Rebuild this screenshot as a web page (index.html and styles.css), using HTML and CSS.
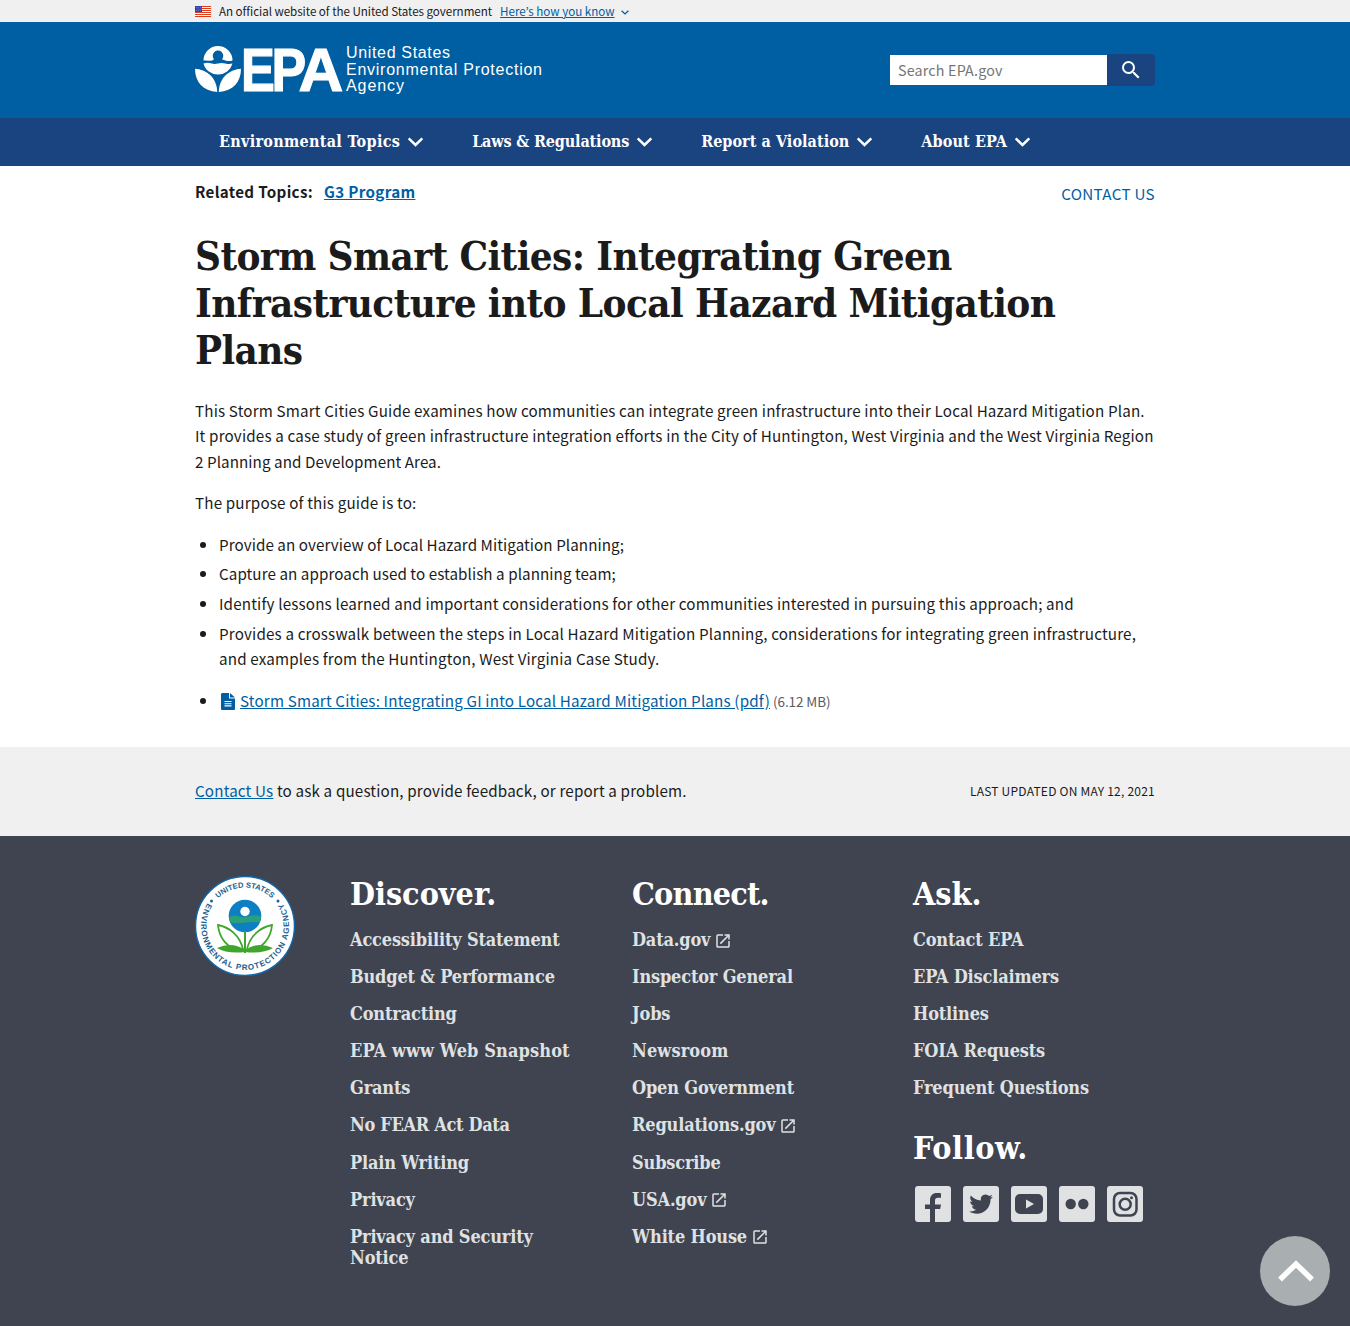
FILE: index.html
```html
<!DOCTYPE html>
<html lang="en">
<head>
<meta charset="utf-8">
<title>Storm Smart Cities: Integrating Green Infrastructure into Local Hazard Mitigation Plans | US EPA</title>
<link rel="stylesheet" href="styles.css">
</head>
<body>
<svg class="defs" width="0" height="0" aria-hidden="true">
  <symbol id="chevron" viewBox="0 0 16 10"><path d="M1.200 1.400 8 8l6.800-6.600" fill="none" stroke="currentColor" stroke-width="2.500"/></symbol>
  <symbol id="launch" viewBox="0 0 24 24"><path fill="currentColor" d="M19 19H5V5h7V3H5a2 2 0 0 0-2 2v14a2 2 0 0 0 2 2h14c1.100 0 2-.9 2-2v-7h-2v7zM14 3v2h3.590l-9.830 9.830 1.410 1.410L19 6.410V10h2V3h-7z"/></symbol>
</svg>

<div class="banner">
  <div class="container banner-row">
    <svg class="flag" viewBox="0 0 16 11"><path fill="#fff" d="M0 0h16v11H0z"/><path stroke="#db3e1f" d="M0 .5h16M0 2.500h16M0 4.500h16M0 6.500h16M0 8.500h16M0 10.500h16"/><path fill="#1e33b1" d="M0 0h7v6H0z"/><path stroke="#b9c2f0" stroke-width=".8" stroke-dasharray="1 1" d="M.7 1.200H7M1.500 3H7M.7 4.800H7"/></svg>
    <span class="banner-text">An official website of the United States government</span>
    <a class="banner-link" href="#">Here’s how you know</a>
    <svg class="banner-chev"><use href="#chevron"/></svg>
  </div>
</div>

<header class="header">
  <div class="container header-row">
    <svg class="logo" width="350" height="52" viewBox="0 0 350 52" role="img" aria-label="United States Environmental Protection Agency">
      <g fill="#fff">
        <path d="M8.500 14.500A14.500 14.500 0 0 1 37.500 14.500q-3.500 1-7 0-3-1-3.500-1.300A5.300 5.300 0 1 0 19 13.200q-2 1.800-4.500 1.500t-6-.2z"/>
        <path d="M8.500 17.500q4-1.300 7.500-.2t7 .1 7.300 0 7.200.1A14.600 14.600 0 0 1 23 28.500 14.600 14.600 0 0 1 8.500 17.500z"/>
        <path d="M0 22.700C11 23.500 22 31 22.200 46 8 45 0 36 0 22.700z"/>
        <path d="M46 22.700C35 23.500 24 31 23.800 46 38 45 46 36 46 22.700z"/>
        <g font-family="Liberation Sans, Arial, sans-serif" font-weight="700" font-size="62" stroke="#fff" stroke-width="1.200">
          <text transform="translate(46 44.500) scale(.82 1)">E</text>
          <text transform="translate(76.500 44.500) scale(.84 1)">P</text>
          <text transform="translate(103.500 44.500)">A</text>
        </g>
        <g font-family="Liberation Sans, Arial, sans-serif" font-size="16">
          <text x="151" y="12.300" textLength="104">United States</text>
          <text x="151" y="28.800" textLength="196">Environmental Protection</text>
          <text x="151" y="45.300" textLength="58">Agency</text>
        </g>
      </g>
    </svg>
    <form class="search">
      <input type="search" placeholder="Search EPA.gov" aria-label="Search">
      <button type="button" aria-label="Search"><svg viewBox="0 0 24 24"><path fill="#fff" d="M15.500 14h-.79l-.28-.27A6.470 6.470 0 0 0 16 9.500 6.500 6.500 0 1 0 9.500 16c1.610 0 3.090-.59 4.230-1.570l.27.28v.79l5 4.990L20.490 19l-4.990-5zm-6 0a4.500 4.500 0 1 1 0-9 4.500 4.500 0 0 1 0 9z"/></svg></button>
    </form>
  </div>
</header>

<nav class="nav">
  <div class="container nav-row">
    <a href="#" class="topics"><span>Environmental Topics</span><svg><use href="#chevron"/></svg></a>
    <a href="#" class="laws"><span>Laws &amp; Regulations</span><svg><use href="#chevron"/></svg></a>
    <a href="#" class="report"><span>Report a Violation</span><svg><use href="#chevron"/></svg></a>
    <a href="#" class="about"><span>About EPA</span><svg><use href="#chevron"/></svg></a>
  </div>
</nav>

<main class="container main">
  <div class="related">
    <p><b class="related-label">Related Topics:</b><a class="related-link" href="#">G3 Program</a></p>
    <a class="contact" href="#">CONTACT US</a>
  </div>
  <h1>Storm Smart Cities: Integrating Green<br>Infrastructure into Local Hazard Mitigation<br>Plans</h1>
  <p class="copy">This Storm Smart Cities Guide examines how communities can integrate green infrastructure into their Local Hazard Mitigation Plan.<br>It provides a case study of green infrastructure integration efforts in the City of Huntington, West Virginia and the West Virginia Region<br><span class="snug">2 Planning and Development Area.</span></p>
  <p class="copy">The purpose of this guide is to:</p>
  <ul>
    <li class="snug">Provide an overview of Local Hazard Mitigation Planning;</li>
    <li class="snug">Capture an approach used to establish a planning team;</li>
    <li>Identify lessons learned and important considerations for other communities interested in pursuing this approach; and</li>
    <li>Provides a crosswalk between the steps in Local Hazard Mitigation Planning, considerations for integrating green infrastructure,<br>and examples from the Huntington, West Virginia Case Study.</li>
  </ul>
  <ul>
    <li><svg class="file" viewBox="0 0 14 17"><path fill="#005ea2" d="M1.500 0H8v5.500h6V16a1 1 0 0 1-1 1H1a1 1 0 0 1-1-1V1.200Q0 0 1.500 0zM9 0l5 4.500H9z"/><path stroke="#fff" stroke-width="1.100" d="M3.500 8.500h7M3.500 10.700h7M3.500 12.900h7"/></svg><a class="pdf" href="#">Storm Smart Cities: Integrating GI into Local Hazard Mitigation Plans (pdf)</a><span class="size">(6.12 MB)</span></li>
  </ul>
</main>

<div class="feedback">
  <div class="container feedback-row">
    <p><a href="#">Contact Us</a> to ask a question, provide feedback, or report a problem.</p>
    <span class="updated">LAST UPDATED ON MAY 12, 2021</span>
  </div>
</div>

<footer class="footer">
  <div class="container footer-row">
    <svg class="seal" viewBox="0 0 100 100" role="img" aria-label="EPA seal">
      <defs>
        <path id="arc-top" d="M11.500 50A38.500 38.500 0 0 1 88.500 50"/>
        <path id="arc-bottom" d="M13.200 25.900A44 44 0 1 0 86.800 25.900"/>
      </defs>
      <circle cx="50" cy="50" r="49.500" fill="#fff" stroke="#1167a8" stroke-width="1.500"/>
      <g font-family="Liberation Sans, Arial, sans-serif" font-size="8" font-weight="700" fill="#21618f" text-anchor="middle">
        <text font-size="7.600"><textPath href="#arc-top" startOffset="50%">UNITED STATES</textPath></text>
        <text><textPath href="#arc-bottom" startOffset="50%" textLength="186">ENVIRONMENTAL PROTECTION AGENCY</textPath></text>
      </g>
      <circle cx="16.500" cy="25" r="1.500" fill="#21618f"/><circle cx="83" cy="25" r="1.500" fill="#21618f"/>
      <circle cx="50" cy="40" r="16.300" fill="#0d7fc3"/>
      <path fill="#2a9f78" d="M34 41q5-2 10-.5t10-.3 12 0A16.300 16.300 0 0 1 64.500 46.500q-6-1-14 0t-15 0A16 16 0 0 1 34 41z"/>
      <circle cx="50" cy="35.500" r="4.700" fill="#fff"/>
      <g fill="#fff" stroke="#3fa52d" stroke-width="1.800"><path d="M48.500 75C45 58 33 51 23 49c1 12 9 25 25.500 26z"/><path d="M51.500 75C55 58 67 51 77 49c-1 12-9 25-25.500 26z"/></g>
      <path fill="#3fa52d" d="M49 55h2v22h-2zM22 72q15-7 28 2 13-9 28-2-10 6-28 4-18 2-28-4z"/>
    </svg>
    <section class="col discover">
      <h2>Discover.</h2>
      <a href="#">Accessibility Statement</a><a href="#">Budget &amp; Performance</a><a href="#">Contracting</a><a class="wide" href="#">EPA www Web Snapshot</a><a href="#">Grants</a><a href="#" class="tight">No FEAR Act Data</a><a href="#">Plain Writing</a><a href="#">Privacy</a><a href="#">Privacy and Security<br>Notice</a>
    </section>
    <section class="col connect">
      <h2>Connect.</h2>
      <a href="#">Data.gov<svg><use href="#launch"/></svg></a><a href="#">Inspector General</a><a href="#">Jobs</a><a class="wide" href="#">Newsroom</a><a href="#">Open Government</a><a href="#">Regulations.gov<svg><use href="#launch"/></svg></a><a href="#">Subscribe</a><a href="#">USA.gov<svg><use href="#launch"/></svg></a><a href="#">White House<svg><use href="#launch"/></svg></a>
    </section>
    <section class="col ask">
      <h2>Ask.</h2>
      <a href="#">Contact EPA</a><a href="#">EPA Disclaimers</a><a href="#">Hotlines</a><a href="#">FOIA Requests</a><a href="#">Frequent Questions</a>
      <h2 class="follow">Follow.</h2>
      <div class="social">
        <svg viewBox="0 0 36 36"><rect width="36" height="36" rx="3"/><path class="ink" d="M15 36V23h-5v-4.500h5v-4c0-5 2.600-7.500 7-7.500 1.800 0 3.200.1 4 .3v4.400h-3c-2.200 0-3 1-3 3v3.800h6l-.8 4.500H20V36z"/></svg>
        <svg viewBox="0 0 36 36"><rect width="36" height="36" rx="3"/><path class="ink" transform="translate(4.500 4) scale(1.130)" d="M22.460 6c-.77.350-1.600.58-2.460.69.880-.53 1.560-1.370 1.880-2.380-.83.500-1.750.85-2.720 1.050A4.270 4.270 0 0 0 11.880 9.250C8.280 9.090 5.110 7.380 3 4.790c-.37.630-.58 1.370-.58 2.150 0 1.490.75 2.810 1.910 3.560-.71 0-1.370-.2-1.950-.5v.03c0 2.080 1.480 3.820 3.440 4.210a4.220 4.220 0 0 1-1.930.07 4.280 4.280 0 0 0 4 2.980 8.520 8.520 0 0 1-5.330 1.840c-.34 0-.68-.02-1.020-.06C3.440 20.290 5.700 21 8.120 21 16 21 20.330 14.460 20.330 8.790c0-.19 0-.37-.01-.56.840-.6 1.560-1.360 2.140-2.230z"/></svg>
        <svg viewBox="0 0 36 36"><rect width="36" height="36" rx="3"/><rect class="ink" x="4" y="8" width="28" height="20" rx="5"/><path d="m15 13.500 8 4.500-8 4.500z"/></svg>
        <svg viewBox="0 0 36 36"><rect width="36" height="36" rx="3"/><circle class="ink" cx="11.700" cy="18" r="5.200"/><circle class="ink" cx="24.300" cy="18" r="5.200"/></svg>
        <svg viewBox="0 0 36 36"><rect width="36" height="36" rx="3"/><rect class="line" x="7" y="7" width="22.500" height="22.500" rx="6"/><circle class="line" cx="18.200" cy="18.200" r="5.500"/><circle class="ink" cx="24.500" cy="11.800" r="1.500"/></svg>
      </div>
    </section>
  </div>
</footer>
<a class="top" href="#" aria-label="Back to top"><svg viewBox="0 0 70 70"><path d="M20 43.500 36 28l16 15.500" fill="none" stroke="#fff" stroke-width="5.500"/></svg></a>
</body>
</html>
```
FILE: styles.css
```css
* { box-sizing: border-box; }
body {
  margin: 0;
  color: #1b1b1b;
  background: #fff;
  font: 15.200px/25.500px "Noto Sans CJK KR", "Noto Sans", sans-serif;
  white-space: nowrap;
}
p, h1, h2, ul { margin: 0; }
a { color: #005ea2; text-underline-offset: 1px; }
svg { display: block; flex: none; }
.defs { position: absolute; }
.container { width: 960px; margin: 0 auto; }

.banner { height: 22px; background: #f0f0f0; font-size: 11.600px; line-height: 22px; }
.banner-row { display: flex; align-items: center; }
.flag { width: 16px; height: 11px; margin-right: 8px; }
.banner-text { margin-right: 8px; letter-spacing: -.04px; }
.banner-chev { width: 8px; height: 5px; margin: 2px 0 0 6px; color: #005ea2; }

.header { height: 96px; background: #005ea2; }
.header-row { display: flex; justify-content: space-between; align-items: center; height: 96px; }
.logo { margin-top: 4px; overflow: visible; }
.search { display: flex; height: 32px; }
.search input { width: 217px; height: 30px; margin: 1px 0; padding: 0 8px 2px; border: 0; border-radius: 0; background: #fff; font: 14.300px "Noto Sans CJK KR", "Noto Sans", sans-serif; letter-spacing: .18px; }
.search input::placeholder { color: #757575; }
.search button { display: grid; place-items: center; width: 48px; padding: 0; border: 0; border-radius: 0 4px 4px 0; background: #1a4480; }
.search button svg { width: 24px; height: 24px; }

.nav { height: 48px; background: #1a4480; font: 700 16px/47px "DejaVu Serif Condensed", "DejaVu Serif", serif; }
.nav-row { display: flex; gap: 48px; padding-left: 24px; }
.nav a { display: flex; align-items: center; gap: 7px; color: #fff; text-decoration: none; }
.nav svg { width: 17px; height: 10px; margin-top: 1px; }
.topics { letter-spacing: .3px; }
.laws { letter-spacing: -.15px; }
.report { letter-spacing: .05px; }
.about { letter-spacing: .1px; }

.main { height: 581px; padding-top: 13px; letter-spacing: .165px; }
.related { display: flex; justify-content: space-between; height: 52.500px; letter-spacing: .32px; }
.related-label { margin-right: 11px; }
.related-link { font-weight: 700; }
.contact { padding-top: 1.500px; text-decoration: none; }
h1 { margin-bottom: 25px; font: 700 40px/47px "DejaVu Serif Condensed", "DejaVu Serif", serif; letter-spacing: -.6px; }
.copy { margin-bottom: 16px; }
.snug { letter-spacing: .07px; }
ul { padding-left: 24px; margin-bottom: 16px; }
li { margin-bottom: 4.200px; }
.file { display: inline-block; width: 14px; height: 17px; margin: 0 5px 0 2px; vertical-align: -3px; }
.size { margin-left: 3px; color: #565c65; font-size: 13.500px; letter-spacing: -.1px; }

.feedback { height: 89px; background: #f0f0f0; }
.feedback-row { display: flex; justify-content: space-between; align-items: center; height: 87px; letter-spacing: .16px; }
.updated { font-size: 12px; letter-spacing: .22px; }

.footer { height: 490px; padding-top: 40px; background: #3f4450; }
.footer-row { display: grid; grid-template-columns: 155px 282px 281px 242px; align-items: start; }
.seal { width: 100px; height: 100px; }
.col { color: #fff; font: 700 18px/21px "DejaVu Serif Condensed", "DejaVu Serif", serif; }
.col h2 { margin-bottom: 17px; font-size: 32px; line-height: 36px; }
.connect h2 { letter-spacing: -.8px; }
.col a { display: flex; align-items: center; margin-bottom: 16.100px; color: #dfe1e2; text-decoration: none; letter-spacing: -.17px; }
.col .wide { letter-spacing: .12px; }
.col .tight { letter-spacing: -.32px; }
.col a svg { width: 18px; height: 18px; margin: 2px 0 0 4px; }
.col .follow { margin: 32px 0 20px; letter-spacing: .6px; }
.social { display: flex; gap: 12px; padding-left: 2px; }
.social svg { width: 36px; height: 36px; fill: #dfe1e2; }
.social .ink { fill: #3f4450; }
.social .line { fill: none; stroke: #3f4450; stroke-width: 2.500; }
.top { position: fixed; right: 20px; bottom: 20px; width: 70px; height: 70px; border-radius: 50%; background: #a9aeb1; }
```
